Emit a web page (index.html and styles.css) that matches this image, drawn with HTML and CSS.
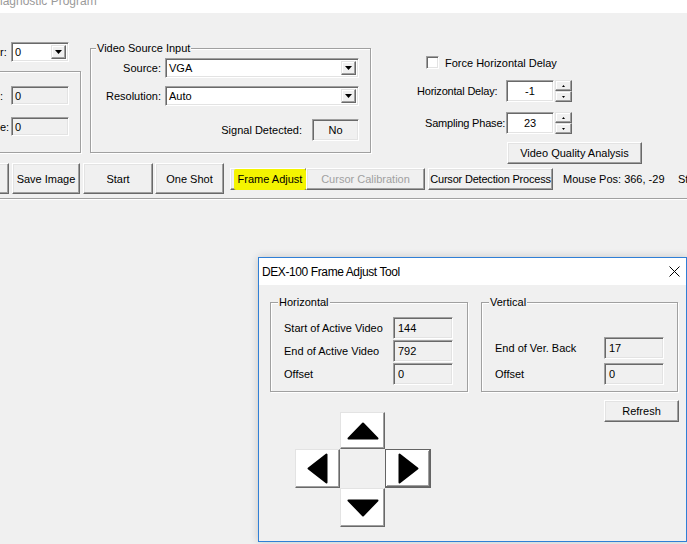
FILE: index.html
```html
<!DOCTYPE html>
<html>
<head>
<meta charset="utf-8">
<link rel="stylesheet" href="styles.css">
</head>
<body>
<div class="titlestrip"><span>iagnostic Program</span></div>

<div class="top">
  <div class="col-left">
    <div class="combo-row">
      <span class="cut-lbl">r:</span>
      <div class="combo combo-small"><span class="cv">0</span><span class="dd"><svg width="7" height="4" viewBox="0 0 7 4"><polygon points="0,0 7,0 3.5,4"/></svg></span></div>
    </div>
    <div class="grp grp-left">
      <div class="lrow"><span class="cut-lbl">:</span><div class="ro ro-left">0</div></div>
      <div class="lrow"><span class="cut-lbl">e:</span><div class="ro ro-left">0</div></div>
    </div>
  </div>

  <div class="grp vsi">
    <span class="legend">Video Source Input</span>
    <div class="vsi-grid">
      <span class="rlbl">Source:</span>
      <div class="combo"><span class="cv">VGA</span><span class="dd"><svg width="7" height="4" viewBox="0 0 7 4"><polygon points="0,0 7,0 3.5,4"/></svg></span></div>
      <span class="rlbl">Resolution:</span>
      <div class="combo"><span class="cv">Auto</span><span class="dd"><svg width="7" height="4" viewBox="0 0 7 4"><polygon points="0,0 7,0 3.5,4"/></svg></span></div>
    </div>
    <div class="signal-row">
      <span>Signal Detected:</span>
      <div class="ro ro-signal">No</div>
    </div>
  </div>

  <div class="col-right">
    <div class="chk-row"><span class="chk"></span><span>Force Horizontal Delay</span></div>
    <div class="spin-row first">
      <span class="slbl">Horizontal Delay:</span>
      <div class="edit">-1</div>
      <div class="spin">
        <span class="sb"><svg width="3" height="2" viewBox="0 0 3 2"><polygon points="1.5,0 3,2 0,2"/></svg></span>
        <span class="sb"><svg width="3" height="2" viewBox="0 0 3 2"><polygon points="0,0 3,0 1.5,2"/></svg></span>
      </div>
    </div>
    <div class="spin-row second">
      <span class="slbl indent">Sampling Phase:</span>
      <div class="edit">23</div>
      <div class="spin">
        <span class="sb"><svg width="3" height="2" viewBox="0 0 3 2"><polygon points="1.5,0 3,2 0,2"/></svg></span>
        <span class="sb"><svg width="3" height="2" viewBox="0 0 3 2"><polygon points="0,0 3,0 1.5,2"/></svg></span>
      </div>
    </div>
    <div class="btn vqa">Video Quality Analysis</div>
  </div>
</div>

<div class="btnrow">
  <div class="btn b-partial"></div>
  <div class="btn b-save">Save Image</div>
  <div class="btn b-start">Start</div>
  <div class="btn b-one">One Shot</div>
  <div class="btn b-frame"><span class="hl">Frame Adjust</span></div>
  <div class="btn b-cc disabled">Cursor Calibration</div>
  <div class="btn b-cdp">Cursor Detection Process</div>
  <span class="mouse">Mouse Pos: 366, -29</span>
  <span class="st">St</span>
</div>
<div class="sep"></div>

<div class="dlg">
  <div class="dlg-title">
    <span class="dlg-caption">DEX-100 Frame Adjust Tool</span>
    <svg class="close" width="11" height="11" viewBox="0 0 11 11"><path d="M0.5 0.5 L10.5 10.5 M10.5 0.5 L0.5 10.5" stroke="#000" stroke-width="1" fill="none"/></svg>
  </div>
  <div class="dlg-body">
    <div class="groups">
      <div class="grp dgrp hgrp">
        <span class="legend dleg">Horizontal</span>
        <div class="drow"><span class="dlbl">Start of Active Video</span><div class="ro dro">144</div></div>
        <div class="drow"><span class="dlbl">End of Active Video</span><div class="ro dro">792</div></div>
        <div class="drow"><span class="dlbl">Offset</span><div class="ro dro">0</div></div>
      </div>
      <div class="grp dgrp vgrp">
        <span class="legend dleg">Vertical</span>
        <div class="drow"><span class="dlbl">End of Ver. Back</span><div class="ro dro">17</div></div>
        <div class="drow"><span class="dlbl">Offset</span><div class="ro dro">0</div></div>
      </div>
    </div>
    <div class="row2">
      <div class="pad">
        <div class="abtn up"><svg width="32" height="18" viewBox="0 0 32 18"><polygon points="16,1.5 30.5,16.5 1.5,16.5" fill="#000" stroke="#000" stroke-width="2" stroke-linejoin="round"/></svg></div>
        <div class="abtn left"><svg width="21" height="31" viewBox="0 0 21 31"><polygon points="1.5,15.5 19.5,1.5 19.5,29.5" fill="#000" stroke="#000" stroke-width="2" stroke-linejoin="round"/></svg></div>
        <div class="abtn right focus"><svg width="21" height="31" viewBox="0 0 21 31"><polygon points="19.5,15.5 1.5,1.5 1.5,29.5" fill="#000" stroke="#000" stroke-width="2" stroke-linejoin="round"/></svg></div>
        <div class="abtn down"><svg width="32" height="18" viewBox="0 0 32 18"><polygon points="1.5,1.5 30.5,1.5 16,16.5" fill="#000" stroke="#000" stroke-width="2" stroke-linejoin="round"/></svg></div>
      </div>
      <div class="btn refresh">Refresh</div>
    </div>
  </div>
</div>
</body>
</html>
```

FILE: styles.css
```css
* { box-sizing: border-box; }
html, body { margin: 0; padding: 0; }
body {
  width: 687px;
  height: 544px;
  overflow: hidden;
  position: relative;
  background: #f0f0f0;
  font-family: "Liberation Sans", Arial, sans-serif;
  font-size: 11px;
  color: #000;
}

/* main window title strip */
.titlestrip {
  height: 13px;
  background: #fff;
  overflow: hidden;
  font-size: 12px;
  line-height: 12px;
  color: #9a9a9a;
}
.titlestrip span { display: block; margin-top: -5px; padding-left: 0; }

/* shared controls */
.grp {
  position: relative;
  border: 1px solid #a0a0a0;
  box-shadow: inset 1px 1px #fff, 1px 1px #fff;
}
.legend {
  position: absolute;
  top: -7px;
  left: 5px;
  padding: 0 1px;
  line-height: 13px;
  background: #f0f0f0;
  white-space: nowrap;
}
.combo {
  display: flex;
  height: 20px;
  background: #fff;
  border: 1px solid;
  border-color: #a0a0a0 #fff #fff #a0a0a0;
  box-shadow: inset 1px 1px #696969, inset -1px -1px #e3e3e3;
  padding: 2px;
}
.cv { flex: 1; padding-left: 1px; line-height: 14px; }
.dd {
  width: 15px;
  background: #f0f0f0;
  border: 1px solid;
  border-color: #e3e3e3 #696969 #696969 #e3e3e3;
  box-shadow: inset -1px -1px #a0a0a0, inset 1px 1px #fff;
  display: flex;
  align-items: center;
  justify-content: center;
}
.dd svg, .sb svg { display: block; fill: #000; }
.ro {
  background: #f0f0f0;
  border: 1px solid;
  border-color: #a0a0a0 #fff #fff #a0a0a0;
  box-shadow: inset 1px 1px #696969, inset -1px -1px #e3e3e3;
  display: flex;
  align-items: center;
}
.btn {
  background: #f0f0f0;
  border: 1px solid;
  border-color: #fff #696969 #696969 #fff;
  box-shadow: inset -1px -1px #a0a0a0, inset 1px 1px #e3e3e3;
  display: flex;
  align-items: center;
  justify-content: center;
  white-space: nowrap;
  flex: none;
}
.btn.disabled { color: #a0a0a0; }

/* top area */
.top { display: flex; height: 140px; }
.col-left { width: 80px; flex: none; display: flex; flex-direction: column; }
.combo-row { margin-top: 29px; display: flex; align-items: center; }
.cut-lbl { width: 11px; flex: none; }
.combo-small { width: 58px; }
.grp-left {
  margin-top: 9px;
  margin-left: -2px;
  width: 83px;
  height: 82px;
  padding: 14px 0 0 1px;
  display: flex;
  flex-direction: column;
  gap: 12px;
}
.lrow { display: flex; align-items: center; }
.lrow .cut-lbl { width: 11px; }
.ro-left { width: 58px; height: 19px; padding-left: 3px; }

.vsi {
  margin-left: 10px;
  margin-top: 35px;
  width: 281px;
  height: 105px;
  flex: none;
  padding: 9px 11px 0 0;
}
.vsi-grid {
  display: grid;
  grid-template-columns: 70px 194px;
  column-gap: 4px;
  row-gap: 8px;
  align-items: center;
}
.rlbl { text-align: right; }
.signal-row {
  margin-top: 13px;
  display: flex;
  justify-content: flex-end;
  align-items: center;
  gap: 10px;
}
.ro-signal { width: 47px; height: 22px; justify-content: center; }

.col-right { margin-left: 46px; width: 230px; flex: none; }
.chk-row { margin-top: 43px; margin-left: 9px; height: 13px; display: flex; align-items: center; gap: 6px; white-space: nowrap; }
.chk {
  width: 13px; height: 13px;
  background: #fff;
  border: 1px solid;
  border-color: #a0a0a0 #fff #fff #a0a0a0;
  box-shadow: inset 1px 1px #696969, inset -1px -1px #e3e3e3;
}
.spin-row { display: flex; align-items: center; height: 22px; }
.spin-row.first { margin-top: 11px; }
.spin-row.second { margin-top: 10px; }
.slbl { width: 89px; flex: none; white-space: nowrap; letter-spacing: -0.2px; }
.slbl.indent { padding-left: 8px; }
.edit {
  width: 48px; height: 22px;
  background: #fff;
  border: 1px solid;
  border-color: #a0a0a0 #fff #fff #a0a0a0;
  box-shadow: inset 1px 1px #696969, inset -1px -1px #e3e3e3;
  display: flex; align-items: center; justify-content: center;
}
.spin { margin-left: 1px; width: 17px; height: 22px; display: flex; flex-direction: column; }
.sb {
  flex: 1;
  background: #f0f0f0;
  border: 1px solid;
  border-color: #e3e3e3 #696969 #696969 #e3e3e3;
  box-shadow: inset -1px -1px #a0a0a0, inset 1px 1px #fff;
  display: flex; align-items: center; justify-content: center;
}
.vqa { margin-top: 8px; margin-left: 90px; width: 135px; height: 22px; }

/* button row */
.btnrow { display: flex; align-items: center; height: 31px; margin-top: 10px; }
.btnrow .btn { height: 31px; }
.b-partial { width: 61px; margin-left: -52px; }
.b-save { margin-left: 3px; width: 68px; }
.b-start { margin-left: 3px; width: 70px; }
.b-one { margin-left: 2px; width: 69px; }
.btnrow .b-frame, .btnrow .b-cc, .btnrow .b-cdp { height: 22px; }
.b-frame { margin-left: 6px; width: 76px; justify-content: flex-start; padding: 0; }
.hl {
  flex: 1;
  align-self: stretch;
  margin: 0 -1px -1px 3px;
  background: #f4f400;
  border-radius: 2px;
  display: flex; align-items: center; justify-content: center;
}
.b-cc { width: 119px; }
.b-cdp { margin-left: 3px; width: 125px; letter-spacing: -0.2px; }
.mouse { margin-left: 10px; width: 115px; flex: none; white-space: nowrap; }
.st { flex: none; }
.sep { margin-top: 4px; height: 2px; border-top: 1px solid #a0a0a0; border-bottom: 1px solid #fff; }

/* dialog */
.dlg {
  position: absolute;
  left: 258px;
  top: 257px;
  width: 429px;
  height: 285px;
  border: 1px solid #2f7fd6;
  background: #f0f0f0;
  box-shadow: 0 0 8px rgba(0, 0, 0, 0.18);
}
.dlg-title {
  height: 27px;
  background: #fff;
  display: flex;
  align-items: center;
  justify-content: space-between;
  padding: 0 6px 0 3px;
}
.dlg-caption { font-size: 12px; letter-spacing: -0.4px; }
.close { display: block; }
.dlg-body { padding: 17px 0 0 11px; }
.groups { display: flex; gap: 13px; }
.dgrp { height: 90px; display: flex; flex-direction: column; }
.dleg { left: 7px; }
.hgrp { width: 198px; padding: 14px 0 0 13px; gap: 1px; }
.vgrp { width: 197px; padding: 34px 0 0 13px; gap: 4px; }
.drow { display: flex; align-items: center; height: 22px; }
.dlbl { width: 109px; flex: none; white-space: nowrap; }
.dro { width: 60px; height: 22px; padding-left: 4px; }
.row2 { display: flex; align-items: flex-start; }
.pad {
  margin-top: 20px;
  margin-left: 25px;
  display: grid;
  grid-template-columns: 45px 45px 46px;
  grid-template-rows: 37px 39px 39px;
}
.abtn {
  background: #fff;
  border: 1px solid;
  border-color: #e3e3e3 #696969 #696969 #e3e3e3;
  box-shadow: inset -1px -1px #a0a0a0;
  display: flex; align-items: center; justify-content: center;
}
.abtn svg { display: block; }
.abtn.up { grid-column: 2; grid-row: 1; }
.abtn.left { grid-column: 1; grid-row: 2; }
.abtn.right { grid-column: 3; grid-row: 2; }
.abtn.down { grid-column: 2; grid-row: 3; }
.abtn.focus {
  border-color: #646464;
  box-shadow: inset -1px -1px #696969, inset 1px 1px #fff, inset -2px -2px #a0a0a0;
}
.refresh { margin-left: auto; margin-top: 8px; margin-right: 7px; width: 75px; height: 22px; }
```
